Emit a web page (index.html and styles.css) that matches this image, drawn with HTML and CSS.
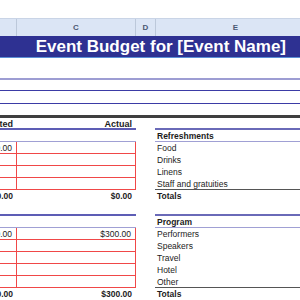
FILE: index.html
```html
<!DOCTYPE html>
<html lang="en">
<head>
    <meta charset="UTF-8">
    <meta name="viewport" content="width=device-width, initial-scale=1.0">
    <title>Event Budget</title>
    <link rel="stylesheet" href="styles.css">
</head>
<body>
    <div class="sheet">
        <!-- column letters -->
        <div class="col-heads">
            <div class="col-head col-b"></div>
            <div class="col-head col-c">C</div>
            <div class="col-head col-d">D</div>
            <div class="col-head col-e">E</div>
        </div>

        <div class="title-bar">
            <h1 class="title">Event Budget for [Event Name]</h1>
        </div>

        <!-- empty rows with their borders -->
        <div class="rule rule-light"></div>
        <div class="rule rule-blue rule-first"></div>
        <div class="rule rule-blue"></div>
        <div class="rule rule-dark"></div>

        <div class="budget">
            <!-- Estimated / Actual -->
            <div class="money">
                <div class="m-row m-head">
                    <div class="m-cell m-b">Estimated</div>
                    <div class="m-cell m-c">Actual</div>
                </div>
                <div class="m-row m-blank"></div>
                <div class="m-row m-grid">
                    <div class="m-cell m-b">$0.00</div>
                    <div class="m-cell m-c"></div>
                </div>
                <div class="m-row m-grid">
                    <div class="m-cell m-b"></div>
                    <div class="m-cell m-c"></div>
                </div>
                <div class="m-row m-grid">
                    <div class="m-cell m-b"></div>
                    <div class="m-cell m-c"></div>
                </div>
                <div class="m-row m-grid">
                    <div class="m-cell m-b"></div>
                    <div class="m-cell m-c"></div>
                </div>
                <div class="m-row m-total">
                    <div class="m-cell m-b">$0.00</div>
                    <div class="m-cell m-c">$0.00</div>
                </div>

                <div class="m-row m-head m-spacer"></div>
                <div class="m-row m-blank"></div>
                <div class="m-row m-grid">
                    <div class="m-cell m-b">$300.00</div>
                    <div class="m-cell m-c">$300.00</div>
                </div>
                <div class="m-row m-grid">
                    <div class="m-cell m-b"></div>
                    <div class="m-cell m-c"></div>
                </div>
                <div class="m-row m-grid">
                    <div class="m-cell m-b"></div>
                    <div class="m-cell m-c"></div>
                </div>
                <div class="m-row m-grid">
                    <div class="m-cell m-b"></div>
                    <div class="m-cell m-c"></div>
                </div>
                <div class="m-row m-grid">
                    <div class="m-cell m-b"></div>
                    <div class="m-cell m-c"></div>
                </div>
                <div class="m-row m-total">
                    <div class="m-cell m-b">$300.00</div>
                    <div class="m-cell m-c">$300.00</div>
                </div>
            </div>

            <!-- categories -->
            <div class="items">
                <div class="i-row i-top"></div>
                <div class="i-row i-cat">Refreshments</div>
                <div class="i-row">Food</div>
                <div class="i-row">Drinks</div>
                <div class="i-row">Linens</div>
                <div class="i-row i-last">Staff and gratuities</div>
                <div class="i-row i-total">Totals</div>

                <div class="i-row i-top i-spacer"></div>
                <div class="i-row i-cat">Program</div>
                <div class="i-row">Performers</div>
                <div class="i-row">Speakers</div>
                <div class="i-row">Travel</div>
                <div class="i-row">Hotel</div>
                <div class="i-row i-last">Other</div>
                <div class="i-row i-total">Totals</div>
            </div>
        </div>
    </div>
</body>
</html>
```

FILE: styles.css
```css
    *{
        box-sizing: border-box;
    }
    body{
        margin: 0;
        font-family: "Liberation Sans", Arial, sans-serif;
        color: #1c1c1c;
        background: #fff;
    }
    .sheet{
        width: 300px;
        height: 300px;
        overflow: hidden;
    }

    /* column letters */
    .col-heads{
        display: flex;
        margin-top: 18px;
        height: 18px;
        width: 316px;
        background: #dbe5f5;
        border-top: 1px solid #c9d4e6;
    }
    .col-head{
        flex: none;
        display: flex;
        align-items: center;
        justify-content: center;
        font-size: 8px;
        font-weight: bold;
        color: #4a5873;
        border-right: 1px solid #bcc8da;
    }
    .col-b{ width: 17px; }
    .col-c{ width: 119px; }
    .col-d{ width: 20px; }
    .col-e{ width: 160px; }

    .title-bar{
        height: 22px;
        background: #2e3192;
        border-bottom: 1px solid #5b8fd6;
    }
    .title{
        margin: 0;
        padding-right: 14px;
        text-align: right;
        font-size: 17px;
        line-height: 21px;
        font-weight: bold;
        color: #fff;
    }

    .rule{
        width: 300px;
    }
    .rule-light{
        margin-top: 20px;
        height: 2px;
        background: #9d9dd3;
    }
    .rule-blue{
        margin-top: 12px;
        height: 1px;
        background: #3b3ba6;
    }
    .rule-first{
        margin-top: 10px;
    }
    .rule-dark{
        margin-top: 11px;
        height: 3px;
        background: #3f3f3f;
    }

    .budget{
        display: flex;
        gap: 19px;
        font-size: 8.5px;
        line-height: 12px;
    }

    /* left part: estimated and actual amounts */
    .money{
        width: 136px;
        flex: none;
    }
    .m-row{
        display: flex;
        height: 12px;
    }
    .m-cell{
        display: flex;
        justify-content: flex-end;
        padding-right: 4px;
        white-space: nowrap;
        overflow: visible;
    }
    .m-b{ width: 17px; }
    .m-c{ width: 119px; }
    .m-head{
        font-weight: bold;
        font-size: 9px;
        border-bottom: 2px solid #5d5db5;
    }
    .m-spacer{
        height: 14px;
    }
    .m-blank{
        border-bottom: 1px solid #a0a0d4;
    }
    .m-grid{
        border-bottom: 1px solid #f04848;
    }
    .m-grid .m-cell{
        border-right: 1px solid #f04848;
    }
    .m-total{
        font-weight: bold;
    }
    .m-total .m-b, .m-grid .m-b{
        padding-right: 4px;
    }

    /* right part: categories */
    .items{
        width: 160px;
        flex: none;
    }
    .i-row{
        height: 12px;
        padding-left: 2px;
        white-space: nowrap;
    }
    .i-top{
        border-bottom: 2px solid #6a6ab8;
    }
    .i-spacer{
        height: 14px;
    }
    .i-cat{
        font-weight: bold;
        border-bottom: 1px solid #a0a0d4;
    }
    .i-last{
        border-bottom: 1px solid #555;
    }
    .i-total{
        font-weight: bold;
    }
```
